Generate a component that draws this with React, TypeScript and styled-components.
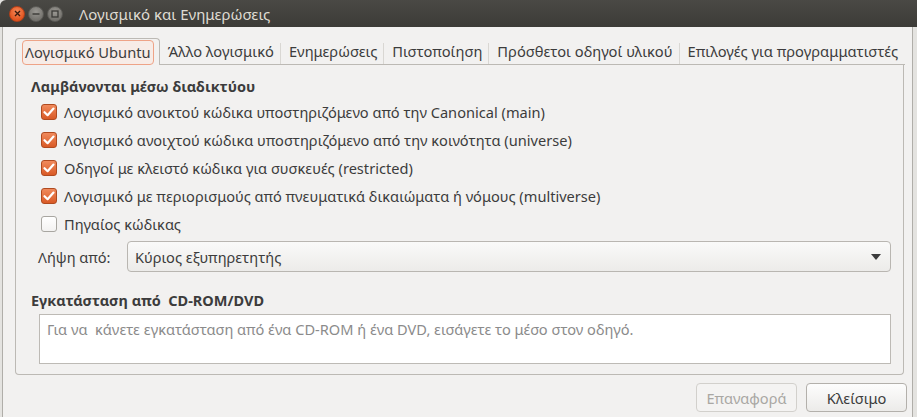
import styled, { createGlobalStyle } from "styled-components";

const FONT = `"Noto Sans", "Open Sans", "DejaVu Sans", sans-serif`;

const GlobalStyle = createGlobalStyle`
  html, body {
    margin: 0;
    padding: 0;
    background: #e4e3e0;
  }
  body {
    font-family: ${FONT};
    color: #3c3c3c;
  }
`;

const tabs = [
  "Λογισμικό Ubuntu",
  "Άλλο λογισμικό",
  "Ενημερώσεις",
  "Πιστοποίηση",
  "Πρόσθετοι οδηγοί υλικού",
  "Επιλογές για προγραμματιστές",
];

const sources = [
  { label: "Λογισμικό ανοικτού κώδικα υποστηριζόμενο από την Canonical (main)", checked: true },
  { label: "Λογισμικό ανοιχτού κώδικα υποστηριζόμενο από την κοινότητα (universe)", checked: true },
  { label: "Οδηγοί με κλειστό κώδικα για συσκευές (restricted)", checked: true },
  { label: "Λογισμικό με περιορισμούς από πνευματικά δικαιώματα ή νόμους (multiverse)", checked: true },
  { label: "Πηγαίος κώδικας", checked: false },
];

const App = () => {
  return (
    <>
      <GlobalStyle />
      <Screen>
        <TitleBar>
          <WinButton $kind="close">
            <svg width="7" height="7" viewBox="0 0 7 7">
              <path d="M1 1 L6 6 M6 1 L1 6" stroke="#3a1a0e" strokeWidth="1.4" />
            </svg>
          </WinButton>
          <WinButton $kind="other">
            <svg width="8" height="8" viewBox="0 0 8 8">
              <path d="M0.5 4 H7.5" stroke="#3a3936" strokeWidth="1.4" />
            </svg>
          </WinButton>
          <WinButton $kind="other">
            <svg width="8" height="8" viewBox="0 0 8 8">
              <rect x="1" y="1" width="6" height="6" fill="none" stroke="#3a3936" strokeWidth="1.3" />
            </svg>
          </WinButton>
          <Title>Λογισμικό και Ενημερώσεις</Title>
        </TitleBar>

        <Body>
          <Notebook>
            <TabRow>
              {tabs.map((t, i) => (
                <Tab key={t} $active={i === 0} $sep={i > 1}>
                  {i === 0 ? <Focus>{t}</Focus> : t}
                </Tab>
              ))}
              <TabFill />
            </TabRow>

            <Page>
              <Heading>Λαμβάνονται μέσω διαδικτύου</Heading>
              <CheckList>
                {sources.map((s) => (
                  <CheckRow key={s.label}>
                    <Box $checked={s.checked}>
                      {s.checked && (
                        <svg width="12" height="10" viewBox="0 0 12 10">
                          <path
                            d="M1.5 5.2 L4.6 8.2 L10.5 1.6"
                            fill="none"
                            stroke="#ffffff"
                            strokeWidth="2.2"
                            strokeLinecap="round"
                            strokeLinejoin="round"
                          />
                        </svg>
                      )}
                    </Box>
                    <span>{s.label}</span>
                  </CheckRow>
                ))}
              </CheckList>

              <ComboRow>
                <ComboLabel>Λήψη από:</ComboLabel>
                <Combo>
                  <span>Κύριος εξυπηρετητής</span>
                  <svg width="10" height="6" viewBox="0 0 10 6">
                    <path d="M0 0 H10 L5 6 Z" fill="#3c3c3c" />
                  </svg>
                </Combo>
              </ComboRow>

              <Heading $top>Εγκατάσταση από&nbsp; CD-ROM/DVD</Heading>
              <InfoBox>
                Για να&nbsp; κάνετε εγκατάσταση από ένα CD-ROM ή ένα DVD, εισάγετε το μέσο στον οδηγό.
              </InfoBox>
            </Page>
          </Notebook>

          <ButtonRow>
            <Button disabled>Επαναφορά</Button>
            <Button>Κλείσιμο</Button>
          </ButtonRow>
        </Body>
      </Screen>
    </>
  );
};

const Screen = styled.div`
  width: 917px;
  height: 417px;
  overflow: hidden;
  display: flex;
  flex-direction: column;
`;

const TitleBar = styled.div`
  height: 27px;
  flex: none;
  display: flex;
  align-items: center;
  padding-left: 9px;
  gap: 3px;
  background: linear-gradient(#4a4945, #3c3b37);
  border-radius: 6px 0 0 0;
`;

const WinButton = styled.div<{ $kind: "close" | "other" }>`
  width: 16px;
  height: 16px;
  border-radius: 50%;
  display: flex;
  align-items: center;
  justify-content: center;
  box-sizing: border-box;
  border: 1px solid ${(p) => (p.$kind === "close" ? "#b3401a" : "#5a5955")};
  background: ${(p) =>
    p.$kind === "close"
      ? "radial-gradient(circle at 50% 35%, #f68a5a, #e2541f 70%)"
      : "radial-gradient(circle at 50% 35%, #9a9893, #75736e 70%)"};
`;

const Title = styled.div`
  margin-left: 13px;
  font-size: 15px;
  color: #dfdbd2;
  white-space: nowrap;
`;

const Body = styled.div`
  flex: 1;
  margin: 0 4px 0 2px;
  border-left: 1px solid #b0aea9;
  border-right: 1px solid #b0aea9;
  background: #f2f1f0;
  padding: 11px 0 0 12px;
  display: flex;
  flex-direction: column;
`;

const Notebook = styled.div`
  margin-right: 8px;
  display: flex;
  flex-direction: column;
`;

const TabRow = styled.div`
  display: flex;
  align-items: flex-end;
  height: 27px;
  font-size: 14.7px;
`;

const Tab = styled.div<{ $active: boolean; $sep: boolean }>`
  position: relative;
  box-sizing: border-box;
  display: flex;
  align-items: center;
  white-space: nowrap;
  height: 27px;
  padding: ${(p) => (p.$active ? "0 5px 0 6px" : "0 7px 0 8px")};
  border: ${(p) => (p.$active ? "1px solid #bcb9b4" : "none")};
  border-bottom: ${(p) => (p.$active ? "none" : "1px solid #bcb9b4")};
  border-radius: ${(p) => (p.$active ? "4px 4px 0 0" : "0")};
  color: #3c3c3c;

  &::before {
    content: "";
    display: ${(p) => (p.$sep ? "block" : "none")};
    position: absolute;
    left: -1px;
    top: 5px;
    bottom: 0;
    width: 1px;
    background: #d9d7d3;
  }
`;

const Focus = styled.span`
  padding: 1px 2px 2px;
  border: 1px solid #eea387;
  border-radius: 4px;
  background: #f7ece7;
`;

const TabFill = styled.div`
  flex: 1;
  height: 27px;
  box-sizing: border-box;
  border-bottom: 1px solid #bcb9b4;
`;

const Page = styled.div`
  height: 310px;
  box-sizing: border-box;
  border: 1px solid #bcb9b4;
  border-top: none;
  border-radius: 0 0 4px 4px;
  padding: 11px 12px 0 15px;
  display: flex;
  flex-direction: column;
`;

const Heading = styled.div<{ $top?: boolean }>`
  font-weight: 700;
  font-size: 14.5px;
  line-height: 20px;
  margin-top: ${(p) => (p.$top ? "18px" : "0")};
  white-space: nowrap;
`;

const CheckList = styled.div`
  margin-top: 2px;
  display: flex;
  flex-direction: column;
`;

const CheckRow = styled.div`
  height: 28px;
  display: flex;
  align-items: center;
  gap: 7px;
  padding-left: 10px;
  font-size: 14.6px;
  white-space: nowrap;
`;

const Box = styled.div<{ $checked: boolean }>`
  width: 16px;
  height: 16px;
  box-sizing: border-box;
  border-radius: 3px;
  display: flex;
  align-items: center;
  justify-content: center;
  border: 1px solid ${(p) => (p.$checked ? "#b04a1f" : "#a8a6a1")};
  background: ${(p) =>
    p.$checked ? "linear-gradient(#f08a5c, #d95a26)" : "linear-gradient(#ffffff, #f3f2f1)"};
`;

const ComboRow = styled.div`
  margin-top: 3px;
  display: flex;
  align-items: center;
  font-size: 14.6px;
`;

const ComboLabel = styled.div`
  width: 96px;
  padding-left: 7px;
  box-sizing: border-box;
`;

const Combo = styled.div`
  flex: 1;
  height: 31px;
  box-sizing: border-box;
  display: flex;
  align-items: center;
  justify-content: space-between;
  padding: 0 9px 0 7px;
  border: 1px solid #b9b6b1;
  border-radius: 4px;
  background: linear-gradient(#fafaf9, #ecebe9);
`;

const InfoBox = styled.div`
  margin: 4px 0 0 8px;
  height: 50px;
  box-sizing: border-box;
  border: 1px solid #bdbab5;
  background: #ffffff;
  padding: 4px 7px;
  font-size: 14.6px;
  color: #8b8b8b;
  white-space: nowrap;
`;

const ButtonRow = styled.div`
  margin-top: 8px;
  padding-right: 5px;
  display: flex;
  justify-content: flex-end;
  gap: 9px;
`;

const Button = styled.button`
  width: 101px;
  height: 29px;
  font-family: ${FONT};
  font-size: 14.6px;
  border-radius: 4px;
  border: 1px solid #b3b0ab;
  color: #3c3c3c;
  background: linear-gradient(#fdfdfd, #ecebe9);

  &:disabled {
    border-color: #d2d0cc;
    color: #a9a7a3;
    background: #f4f3f2;
  }
`;

export default App;
